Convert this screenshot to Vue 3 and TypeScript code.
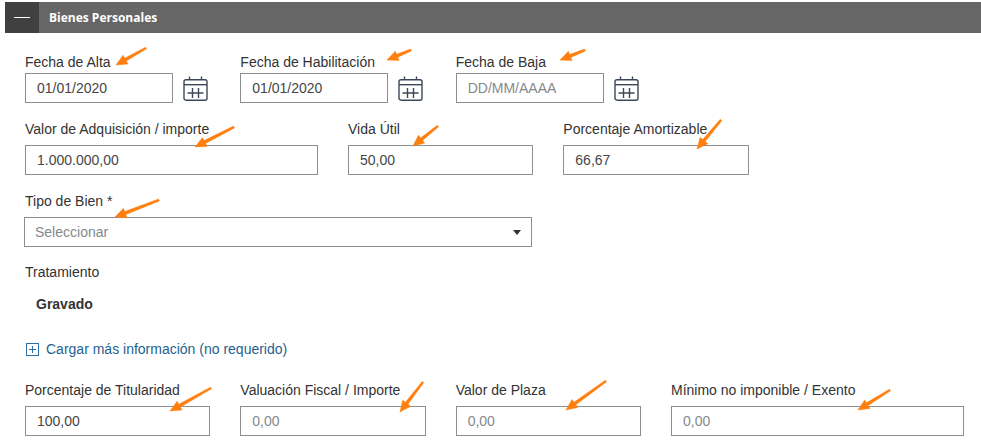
<script setup lang="ts">
interface Arrow { x1: number; y1: number; x2: number; y2: number }
const arrows: Arrow[] = [
  { x1: 146, y1: 48, x2: 116, y2: 65 },
  { x1: 411, y1: 50, x2: 387, y2: 60 },
  { x1: 585, y1: 50, x2: 560, y2: 60 },
  { x1: 234, y1: 127, x2: 195, y2: 147 },
  { x1: 438, y1: 126, x2: 413, y2: 146 },
  { x1: 721, y1: 120, x2: 697, y2: 149 },
  { x1: 159, y1: 200, x2: 115, y2: 217 },
  { x1: 211, y1: 388, x2: 170, y2: 411 },
  { x1: 423, y1: 382, x2: 400, y2: 412 },
  { x1: 606, y1: 381, x2: 566, y2: 410 },
  { x1: 890, y1: 390, x2: 858, y2: 410 },
]
function arrowPoints(a: Arrow): string {
  const dx = a.x2 - a.x1
  const dy = a.y2 - a.y1
  const len = Math.hypot(dx, dy)
  const ux = dx / len
  const uy = dy / len
  const nx = -uy
  const ny = ux
  const bx = a.x2 - ux * 11
  const by = a.y2 - uy * 11
  const pts: [number, number][] = [
    [a.x1 + nx * 1, a.y1 + ny * 1],
    [bx + nx * 1.6, by + ny * 1.6],
    [bx + nx * 5, by + ny * 5],
    [a.x2, a.y2],
    [bx - nx * 5, by - ny * 5],
    [bx - nx * 1.6, by - ny * 1.6],
    [a.x1 - nx * 1, a.y1 - ny * 1],
  ]
  return pts.map((p) => p.join(',')).join(' ')
}
const row1 = [
  { label: 'Fecha de Alta', value: '01/01/2020', placeholder: '' },
  { label: 'Fecha de Habilitación', value: '01/01/2020', placeholder: '' },
  { label: 'Fecha de Baja', value: '', placeholder: 'DD/MM/AAAA' },
]
const row2 = [
  { label: 'Valor de Adquisición / importe', value: '1.000.000,00', span: 3 },
  { label: 'Vida Útil', value: '50,00', span: 2 },
  { label: 'Porcentaje Amortizable', value: '66,67', span: 2 },
]
const row4 = [
  { label: 'Porcentaje de Titularidad', value: '100,00', muted: false, span: 2 },
  { label: 'Valuación Fiscal / Importe', value: '0,00', muted: true, span: 2 },
  { label: 'Valor de Plaza', value: '0,00', muted: true, span: 2 },
  { label: 'Mínimo no imponible / Exento', value: '0,00', muted: true, span: 3 },
]
</script>

<template>
  <div class="page">
    <header class="head">
      <span class="toggle"><span class="dash"></span></span>
      <span class="title">Bienes Personales</span>
    </header>

    <div class="form">
      <div class="grid row-one">
        <div v-for="f in row1" :key="f.label" class="field span2">
          <div class="label tight">{{ f.label }}</div>
          <div class="date">
            <div class="input date-input" :class="{ muted: !f.value }">{{ f.value || f.placeholder }}</div>
            <svg class="cal" viewBox="0 0 25 25" width="25" height="25" fill="none" stroke="#3c4858" stroke-width="1.4">
              <rect x="1" y="3.7" width="23" height="20.5" rx="2" />
              <path d="M1 8.7H24" />
              <path d="M6.5 .5V4M18.5 .5V4" />
              <path d="M4.5 17H20.5M9.5 12V22M15.5 12V22" />
            </svg>
          </div>
        </div>
      </div>

      <div class="grid row-two">
        <div v-for="f in row2" :key="f.label" class="field" :class="'span' + f.span">
          <div class="label">{{ f.label }}</div>
          <div class="input">{{ f.value }}</div>
        </div>
      </div>

      <div class="grid row-three">
        <div class="field span5 select-field">
          <div class="label">Tipo de Bien *</div>
          <div class="input select muted">
            <span>Seleccionar</span>
            <span class="caret"></span>
          </div>
        </div>
      </div>

      <div class="label tight treat">Tratamiento</div>
      <div class="strong">Gravado</div>

      <a class="more">
        <svg viewBox="0 0 13 13" width="13" height="13" fill="none" stroke="#2a6fa5" stroke-width="1">
          <rect x=".5" y=".5" width="12" height="12" />
          <path d="M3 6.5H10M6.5 3V10" />
        </svg>
        <span>Cargar más información (no requerido)</span>
      </a>

      <div class="grid row-four">
        <div v-for="f in row4" :key="f.label" class="field" :class="'span' + f.span">
          <div class="label">{{ f.label }}</div>
          <div class="input" :class="{ muted: f.muted }">{{ f.value }}</div>
        </div>
      </div>
    </div>

    <svg class="arrows" viewBox="0 0 981 448" width="981" height="448">
      <polygon v-for="(a, i) in arrows" :key="i" :points="arrowPoints(a)" fill="#ff7f0e" stroke="#ff7f0e" stroke-width=".5" stroke-linejoin="round" />
    </svg>
  </div>
</template>

<style>
html, body { margin: 0; background: #fff; }
</style>

<style scoped>
.page {
  position: relative;
  width: 981px;
  height: 448px;
  overflow: hidden;
  box-sizing: border-box;
  padding-top: 2px;
  background: #fff;
  font-family: "Liberation Sans", Arial, sans-serif;
  font-size: 14px;
  color: #333;
}
.arrows {
  position: absolute;
  top: 0;
  left: 0;
  pointer-events: none;
}
.head {
  display: flex;
  align-items: center;
  height: 31px;
  margin-left: 5px;
  background: #666;
}
.toggle {
  display: flex;
  align-items: center;
  justify-content: center;
  width: 34px;
  height: 100%;
  background: #404040;
}
.dash { width: 16px; height: 1px; background: #fff; }
.title {
  margin-left: 10px;
  font-family: "Open Sans", sans-serif;
  font-size: 12px;
  font-weight: 700;
  color: #fff;
}
.form { padding: 0 17px 0 25px; }
.grid {
  display: grid;
  grid-template-columns: repeat(9, 1fr);
  column-gap: 30px;
}
.row-one { margin-top: 20px; }
.row-two { margin-top: 17px; }
.row-three { margin-top: 17px; }
.row-four { margin-top: 23px; }
.span2 { grid-column: span 2; }
.span3 { grid-column: span 3; }
.span5 { grid-column: span 5; }
.label {
  height: 18px;
  margin-bottom: 7px;
  line-height: 18px;
  white-space: nowrap;
  color: #333;
}
.label.tight { margin-bottom: 2px; }
.input {
  box-sizing: border-box;
  height: 30px;
  padding: 0 11px;
  border: 1px solid #8e8e8e;
  line-height: 28px;
  color: #464646;
  background: #fff;
}
.input.muted { color: #85898d; }
.date {
  display: flex;
  align-items: center;
  gap: 10px;
}
.date-input { width: 148px; flex: none; }
.cal { flex: none; }
.select-field { margin-left: -1px; margin-right: 1px; }
.select-field .label { margin-left: 1px; }
.input.select {
  display: flex;
  align-items: center;
  justify-content: space-between;
  padding: 0 10px;
}
.caret {
  width: 0;
  height: 0;
  border-left: 4.5px solid transparent;
  border-right: 4.5px solid transparent;
  border-top: 5px solid #333;
}
.treat { margin-top: 16px; }
.strong {
  margin: 14px 0 0 11px;
  height: 18px;
  line-height: 18px;
  font-weight: 700;
  color: #333;
}
.more {
  display: flex;
  align-items: center;
  gap: 7px;
  margin-top: 27px;
  margin-left: 1px;
  height: 18px;
  color: #1f5f8f;
}
</style>
